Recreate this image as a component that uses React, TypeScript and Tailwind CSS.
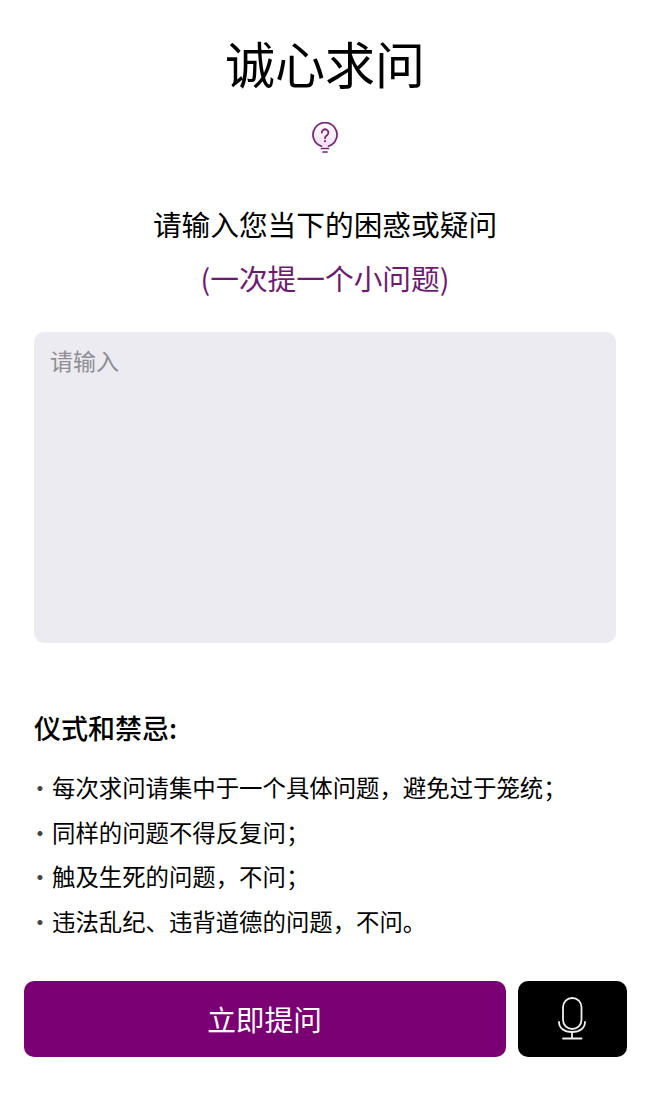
const items = [
  "每次求问请集中于一个具体问题，避免过于笼统；",
  "同样的问题不得反复问；",
  "触及生死的问题，不问；",
  "违法乱纪、违背道德的问题，不问。",
];
export default function App() {
  return (
    <div className="w-[650px] h-[1103px] bg-white flex flex-col items-center font-['Noto_Sans_CJK_SC',sans-serif] text-black">
      <h1 className="mt-[28px] text-[50px] leading-[68px] font-normal">诚心求问</h1>
      <svg className="mt-[26px]" width="28" height="32" viewBox="0 0 28 32" fill="none" stroke="#7a1f78" strokeWidth="1.7" strokeLinecap="round" strokeLinejoin="round">
        <defs>
          <linearGradient id="bulb" x1="0" y1="0" x2="0" y2="1">
            <stop offset="0" stopColor="#ffffff" />
            <stop offset="1" stopColor="#f1dff0" />
          </linearGradient>
        </defs>
        <path d="M10.500 24.200A12 12 0 1 1 17.500 24.200Z" fill="url(#bulb)" stroke="none" />
        <path d="M10.500 24.200A12 12 0 1 1 17.500 24.200" />
        <path d="M10.500 26.500h7M12 30h4" />
        <path d="M10.800 10.500a3.300 3.300 0 1 1 5.200 2.800c-1.300 .9-2 1.500-2 2.900" strokeWidth="1.800" />
        <path d="M14 19v.3" strokeWidth="2" />
      </svg>
      <p className="mt-[50px] text-[28.7px] leading-[40px]">请输入您当下的困惑或疑问</p>
      <p className="mt-[14px] text-[28.7px] leading-[40px] text-[#6f1a72]">(一次提一个小问题)</p>
      <div className="mt-[34px] w-[582px] h-[311px] rounded-[10px] bg-[#ecebf1] px-[16px] py-[11px] text-[23px] leading-[34px] text-[#8e8e93]">请输入</div>
      <div className="w-[582px] mt-[55px]">
        <h2 className="text-[27px] leading-[60px] font-medium">仪式和禁忌:</h2>
        <ul className="mt-[7px] text-[23.4px] leading-[44.700px]">
          {items.map((t) => (
            <li key={t} className="flex">
              <span className="w-[12px] mr-[6px] flex justify-center text-[#444444]">·</span>
              <span>{t}</span>
            </li>
          ))}
        </ul>
      </div>
      <div className="w-[603px] mt-[37px] flex gap-[12px]">
        <button className="flex-1 h-[76px] rounded-[10px] bg-[#7a0073] text-white text-[28.7px]">立即提问</button>
        <button className="w-[109px] h-[76px] rounded-[10px] bg-black flex items-center justify-center">
          <svg width="32" height="46" viewBox="0 0 32 46" fill="none" stroke="#f0f0f0" strokeWidth="1.800" strokeLinecap="round">
            <rect x="7" y="2" width="18.500" height="31" rx="9.250" />
            <path d="M3 26c0 6 5 10 13 10s13-4 13-10M16 36v6M7 42.500h18.500" />
          </svg>
        </button>
      </div>
    </div>
  );
}
